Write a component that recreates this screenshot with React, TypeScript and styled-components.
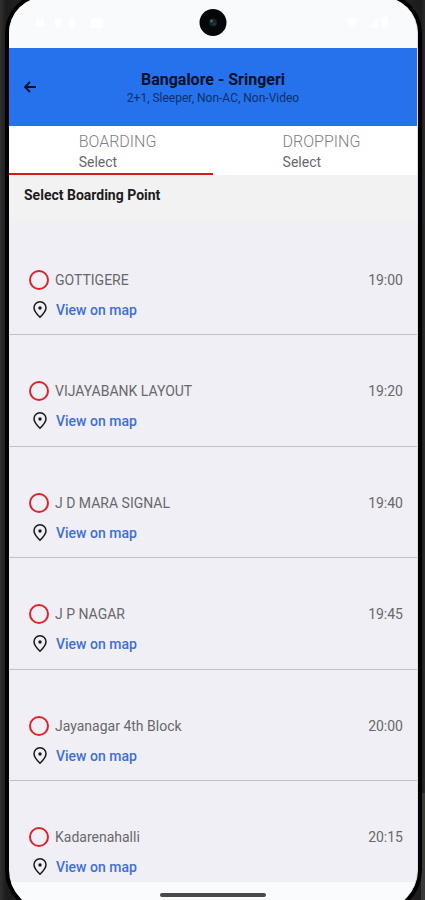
import React, { useState } from "react";
import styled, { createGlobalStyle } from "styled-components";

const GlobalStyle = createGlobalStyle`
  * { box-sizing: border-box; }
  html, body, #root { height: 100%; margin: 0; }
  body { background: #000; overflow: hidden; font-family: Roboto, "Liberation Sans", sans-serif; }
  button, input { font: inherit; margin: 0; }
  button { border: 0; padding: 0; background: none; text-align: left; cursor: pointer; }
`;

const Phone = styled.div`
  position: relative;
  height: 100vh;
  padding: 0 7px 0 9px;
  overflow: hidden;
  background: linear-gradient(90deg, #303030 0, #1c1c1c 6px, #262322 30px, #262322 calc(100% - 30px), #1c1c1c calc(100% - 4px), #2c2a29 100%);
`;

const SideKey = styled.div`
  position: absolute;
  right: 0;
  bottom: 0;
  width: 4px;
  height: 107px;
  border-radius: 3px 0 0 0;
  background: #3a3a3a;
`;

const Screen = styled.main`
  position: relative;
  display: flex;
  flex-direction: column;
  height: calc(100% + 13px);
  margin-top: -3px;
  padding-top: 3px;
  border-radius: 36px 36px 40px 40px;
  overflow: hidden;
  background: #f0eff5;
  border-right: 1px solid #dcdce2;
  box-shadow: 0 0 0 4px #000;
`;

const StatusBar = styled.div`
  display: grid;
  grid-template-columns: 1fr auto 1fr;
  flex: none;
  height: 48px;
  padding: 9px 26px 0;
  background: #f9fafb;
`;

const StatusIcons = styled.div<{ $end?: boolean }>`
  display: flex;
  justify-content: ${({ $end }) => ($end ? "flex-end" : "flex-start")};
  padding-top: 6px;
`;

const Header = styled.header`
  display: grid;
  grid-template-columns: 42px 1fr 42px;
  align-items: center;
  flex: none;
  height: 78px;
  background: #2672ec;
`;

const BackButton = styled.button`
  display: flex;
  justify-content: center;
  color: #06101f;
`;

const Trip = styled.div`
  padding-top: 2px;
  text-align: center;
`;

const Route = styled.h1`
  margin: 0;
  color: #041027;
  font-size: 16px;
  font-weight: 700;
  line-height: 20px;
`;

const Coach = styled.p`
  margin: 0;
  color: #0d2f6b;
  font-size: 12px;
  line-height: 16px;
`;

const Tabs = styled.div`
  display: flex;
  flex: none;
  height: 49px;
  background: #fff;
`;

const Tab = styled.button<{ $active: boolean }>`
  display: flex;
  flex: 1;
  flex-direction: column;
  align-items: center;
  padding-top: 6px;
  border-bottom: 2px solid ${({ $active }) => ($active ? "#d8171b" : "transparent")};
`;

const TabText = styled.span`
  display: flex;
  flex-direction: column;
  padding-left: 13px;
`;

const TabName = styled.span`
  color: #7c8086;
  font-size: 16px;
  font-weight: 300;
  line-height: 20px;
`;

const TabValue = styled.span`
  color: #67696d;
  font-size: 14px;
  line-height: 20px;
`;

const SectionTitle = styled.h2`
  flex: none;
  height: 49px;
  margin: 0;
  padding: 10px 15px;
  background: linear-gradient(#f2f2f2 80%, #f0eff5);
  color: #1c1c1e;
  font-size: 14px;
  font-weight: 700;
  line-height: 20px;
`;

const Points = styled.ul`
  flex: 1;
  min-height: 0;
  margin: 0;
  padding: 0;
  overflow: hidden;
  list-style: none;
`;

const Point = styled.li`
  display: flex;
  flex-direction: column;
  gap: 10px;
  height: 111px;
  padding: 46px 14px 0 20px;
  border-bottom: 1px solid #c2c2c6;
  &:nth-child(even) { height: 112px; }
`;

const Choice = styled.label`
  display: flex;
  align-items: center;
  gap: 6px;
  height: 20px;
  color: #68686c;
  font-size: 14px;
  line-height: 20px;
  cursor: pointer;
`;

const Radio = styled.input`
  appearance: none;
  width: 20px;
  height: 20px;
  border: 2px solid #db252b;
  border-radius: 50%;
  &:checked { background: radial-gradient(#db252b 45%, transparent 50%); }
`;

const Time = styled.time`
  margin-left: auto;
`;

const MapLink = styled.a`
  display: flex;
  align-items: center;
  align-self: flex-start;
  gap: 8px;
  height: 20px;
  padding-left: 3px;
  color: #3f6fd8;
  font-size: 14px;
  font-weight: 500;
  line-height: 20px;
  text-decoration: none;
`;

const NavBar = styled.footer`
  display: flex;
  flex: none;
  justify-content: center;
  height: 28px;
  padding-top: 11px;
  background: #fafbfc;
`;

const HomeHandle = styled.div`
  width: 26%;
  height: 4px;
  border-radius: 2px;
  background: #464a4b;
`;

const points = [
  { name: "GOTTIGERE", time: "19:00" },
  { name: "VIJAYABANK LAYOUT", time: "19:20" },
  { name: "J D MARA SIGNAL", time: "19:40" },
  { name: "J P NAGAR", time: "19:45" },
  { name: "Jayanagar 4th Block", time: "20:00" },
  { name: "Kadarenahalli", time: "20:15" },
];

const Notices = () => (
  <svg width="72" height="16" viewBox="0 0 72 16" fill="#fff" aria-hidden="true">
    <rect x="1" y="4" width="8" height="8" rx="2" />
    <rect x="20" y="4" width="6" height="8" rx="2" />
    <rect x="34" y="4" width="6" height="8" rx="2" />
    <rect x="56" y="3" width="12" height="10" rx="2" />
  </svg>
);

const Signals = () => (
  <svg width="46" height="16" viewBox="0 0 46 16" fill="#fff" aria-hidden="true">
    <path d="M1 5q6-5 12 0L7 13Z" />
    <path d="M26 13V11l7-8v10Z" />
    <rect x="36" y="2" width="7" height="11" rx="1" />
  </svg>
);

const Camera = () => (
  <svg width="28" height="28" viewBox="0 0 28 28" aria-hidden="true">
    <circle cx="14" cy="13.5" r="13.5" fill="#050708" />
    <circle cx="14" cy="13.5" r="4" fill="#142327" />
    <circle cx="12.5" cy="12" r="1.5" fill="#3d6870" />
    <circle cx="15.5" cy="15" r="1" fill="#394166" />
  </svg>
);

const BackIcon = () => (
  <svg width="14" height="14" viewBox="0 0 14 14" fill="none" stroke="currentColor" strokeWidth="1.8" aria-hidden="true">
    <path d="M13 7H2.500M7 2 2 7l5 5" />
  </svg>
);

const PinIcon = () => (
  <svg width="16" height="20" viewBox="0 0 16 20" fill="none" aria-hidden="true">
    <path d="M8 17.200C5.200 14.600 2 11.200 2 7.800a6 6 0 0 1 12 0c0 3.400-3.200 6.800-6 9.400Z" stroke="#19191b" strokeWidth="1.500" />
    <circle cx="8" cy="8" r="1.700" fill="#19191b" />
  </svg>
);

export default function App() {
  const [tab, setTab] = useState("BOARDING");
  return (
    <Phone>
      <GlobalStyle />
      <SideKey />
      <Screen>
        <StatusBar>
          <StatusIcons><Notices /></StatusIcons>
          <Camera />
          <StatusIcons $end><Signals /></StatusIcons>
        </StatusBar>
        <Header>
          <BackButton type="button" aria-label="Back"><BackIcon /></BackButton>
          <Trip>
            <Route>Bangalore - Sringeri</Route>
            <Coach>2+1, Sleeper, Non-AC, Non-Video</Coach>
          </Trip>
        </Header>
        <Tabs role="tablist">
          {["BOARDING", "DROPPING"].map((name) => (
            <Tab key={name} type="button" role="tab" aria-selected={tab === name} $active={tab === name} onClick={() => setTab(name)}>
              <TabText>
                <TabName>{name}</TabName>
                <TabValue>Select</TabValue>
              </TabText>
            </Tab>
          ))}
        </Tabs>
        <SectionTitle>Select Boarding Point</SectionTitle>
        <Points>
          {points.map(({ name, time }) => (
            <Point key={name}>
              <Choice>
                <Radio type="radio" name="point" value={name} />
                {name}
                <Time>{time}</Time>
              </Choice>
              <MapLink href="#map"><PinIcon />View on map</MapLink>
            </Point>
          ))}
        </Points>
        <NavBar><HomeHandle /></NavBar>
      </Screen>
    </Phone>
  );
}
